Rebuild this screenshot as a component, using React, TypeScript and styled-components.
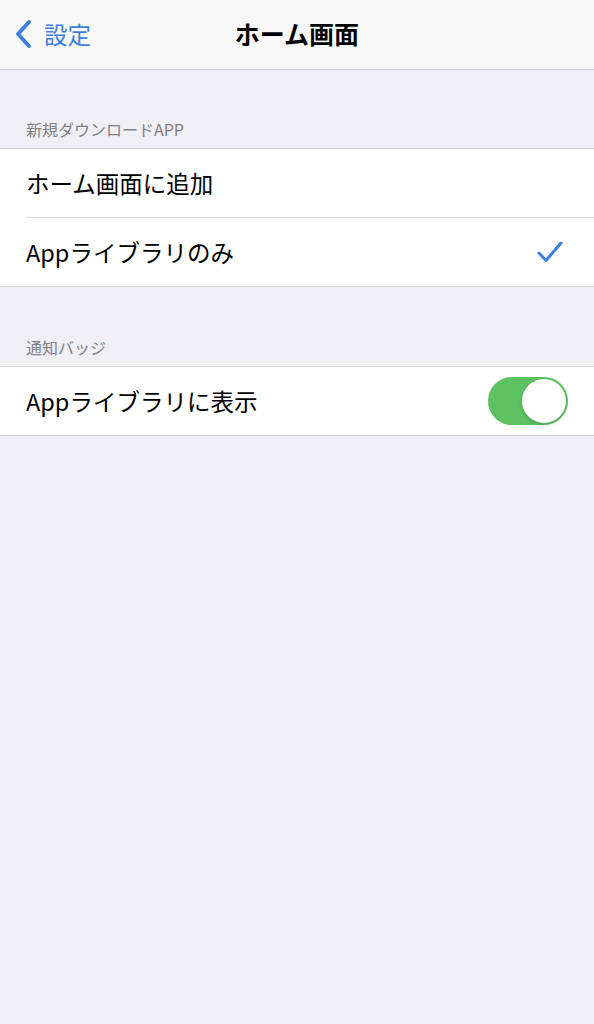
import React from 'react';
import styled, {createGlobalStyle} from 'styled-components';

const GlobalStyle = createGlobalStyle`
  html, body {
    margin: 0;
    padding: 0;
    background: #efeff4;
    font-family: "Noto Sans CJK JP", "Noto Sans", sans-serif;
    -webkit-font-smoothing: antialiased;
  }
`

const Page = styled.div`
  width: 594px;
  min-height: 1024px;
  background: #efeff4;
`
const NavBar = styled.header`
  height: 69px;
  background: #f8f8f8;
  border-bottom: 1px solid #cfcfd3;
  display: grid;
  grid-template-columns: 1fr auto 1fr;
  align-items: center;
`
const BackButton = styled.div`
  display: flex;
  align-items: center;
  gap: 12px;
  padding-left: 14px;
  margin-top: -2px;
  color: #3a7ee0;
  font-size: 23.5px;
`
const Title = styled.h1`
  margin: -3px 0 0;
  font-size: 25px;
  font-weight: 700;
  color: #000;
`
const SectionHeader = styled.div<{ $top: number }>`
  padding: ${p => p.$top}px 26px 8px;
  font-size: 16px;
  color: #808086;
  line-height: 22px;
`
const Group = styled.div`
  background: #fff;
  border-top: 1px solid #d6d6da;
  border-bottom: 1px solid #d6d6da;
`
const Row = styled.div<{ $last?: boolean; $pad?: number }>`
  height: 68px;
  margin-left: 26px;
  padding-right: ${p => p.$pad ?? 26}px;
  display: flex;
  align-items: center;
  justify-content: space-between;
  border-bottom: ${p => (p.$last ? 'none' : '1px solid #dcdce0')};
  font-size: 23.5px;
  color: #000;
`
const Toggle = styled.div`
  width: 80px;
  height: 48px;
  border-radius: 24px;
  background: #5cc262;
  position: relative;
`
const Knob = styled.div`
  position: absolute;
  top: 2px;
  right: 2px;
  width: 44px;
  height: 44px;
  border-radius: 50%;
  background: #fff;
  box-shadow: 0 2px 4px rgba(0, 0, 0, 0.15);
`

const Chevron = () => (
  <svg width="18" height="28" viewBox="0 0 18 28">
    <path d="M15 2 L4 14 L15 26" fill="none" stroke="#3a7ee0" strokeWidth="3.8" strokeLinecap="round" strokeLinejoin="round"/>
  </svg>
)

const Check = () => (
  <svg width="26" height="22" viewBox="0 0 26 22">
    <path d="M2 12 L9 19.5 L24 2" fill="none" stroke="#3a7ee0" strokeWidth="3" strokeLinecap="round" strokeLinejoin="round"/>
  </svg>
)

export default function App() {
  return (
    <Page>
      <GlobalStyle/>
      <NavBar>
        <BackButton>
          <Chevron/>
          <span>設定</span>
        </BackButton>
        <Title>ホーム画面</Title>
        <div/>
      </NavBar>
      <SectionHeader $top={48}>新規ダウンロードAPP</SectionHeader>
      <Group>
        <Row>ホーム画面に追加</Row>
        <Row $last $pad={31}>
          <span>Appライブラリのみ</span>
          <Check/>
        </Row>
      </Group>
      <SectionHeader $top={49}>通知バッジ</SectionHeader>
      <Group>
        <Row $last>
          <span>Appライブラリに表示</span>
          <Toggle><Knob/></Toggle>
        </Row>
      </Group>
    </Page>
  );
}
